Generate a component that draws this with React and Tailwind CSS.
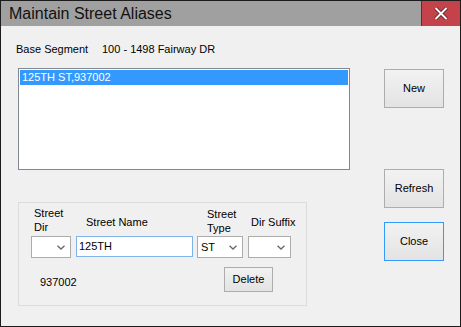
import React from "react";

function Chevron() {
  return (
    <svg width="8" height="5" viewBox="0 0 8 5" className="block">
      <path d="M0.5 0.8 L4 4 L7.5 0.8" fill="none" stroke="#6b6b6b" strokeWidth="1.4" />
    </svg>
  );
}

function Combo({ w, value }) {
  return (
    <div
      className={`${w} h-[22px] bg-white border border-[#acacac] flex items-center justify-between pl-[3px] pr-[5px]`}
    >
      <span className="text-black leading-[13px]">{value}</span>
      <Chevron />
    </div>
  );
}

function Btn({ children, className = "" }) {
  return (
    <div
      className={`flex items-center justify-center border bg-gradient-to-b from-[#f2f2f2] to-[#e3e3e3] text-black ${className}`}
    >
      {children}
    </div>
  );
}

export default function App() {
  return (
    <div className="w-[461px] h-[327px] border border-[#1c1c1c] bg-[#f0f0f0] flex flex-col font-['Liberation_Sans',Arial,sans-serif] text-[11px] leading-[13px] text-black overflow-hidden">
      {/* Title bar */}
      <div className="h-[25px] flex bg-[#a0a0a0] shrink-0">
        <div className="flex-1 flex items-center pl-[8px] text-[16px] leading-[18px] text-[#111]">
          Maintain Street Aliases
        </div>
        <div className="w-[39px] h-full border-l border-[#3c3c3c] bg-[#c4434b] flex items-center justify-center">
          <svg width="16" height="15" viewBox="0 0 16 15">
            <path d="M2.5 2 L13.5 13 M13.5 2 L2.5 13" stroke="#5a1a1f" strokeWidth="3.6" />
            <path d="M2.5 2 L13.5 13 M13.5 2 L2.5 13" stroke="#ffffff" strokeWidth="2" />
          </svg>
        </div>
      </div>

      {/* Body */}
      <div className="flex flex-1">
        {/* Left column */}
        <div className="w-[383px] flex flex-col">
          <div className="mt-[17px] pl-[15px] flex h-[13px]">
            <span className="w-[86px]">Base Segment</span>
            <span>100 - 1498 Fairway DR</span>
          </div>

          <div className="mt-[12px] ml-[17px] w-[332px] h-[102px] border border-[#828790] bg-white p-px">
            <div className="h-[15px] bg-[#3399ff] text-white pl-[2px] flex items-center">
              125TH ST,937002
            </div>
          </div>

          <div className="mt-[32px] ml-[17px] w-[289px] h-[104px] border border-[#dcdcdc] pt-[3px] flex flex-col">
            <div className="flex pl-[12px]">
              <div className="w-[40px] flex flex-col">
                <div className="h-[28px] pl-[3px] leading-[14px]">
                  Street
                  <br />
                  Dir
                </div>
                <div className="mt-[2px]">
                  <Combo w="w-[40px]" value="" />
                </div>
              </div>
              <div className="ml-[5px] w-[117px] flex flex-col">
                <div className="h-[28px] pl-[10px] pt-[9px] leading-[14px] whitespace-nowrap">
                  Street Name
                </div>
                <div className="mt-[2px] h-[21px] bg-white border border-[#7eb4ea] pl-[2px] flex items-center">
                  125TH
                </div>
              </div>
              <div className="ml-[4px] w-[46px] flex flex-col">
                <div className="h-[28px] pl-[10px] pt-[1px] leading-[14px]">
                  Street
                  <br />
                  Type
                </div>
                <div className="mt-[2px]">
                  <Combo w="w-[46px]" value="ST" />
                </div>
              </div>
              <div className="ml-[5px] w-[43px] flex flex-col">
                <div className="h-[28px] pl-[3px] pt-[9px] leading-[14px] whitespace-nowrap">
                  Dir Suffix
                </div>
                <div className="mt-[2px]">
                  <Combo w="w-[43px]" value="" />
                </div>
              </div>
            </div>

            <div className="flex mt-[9px] pl-[21px]">
              <span className="w-[184px] mt-[9px]">937002</span>
              <Btn className="w-[49px] h-[25px] border-[#adadad]">Delete</Btn>
            </div>
          </div>
        </div>

        {/* Right column */}
        <div className="w-[60px] flex flex-col">
          <Btn className="mt-[43px] h-[39px] border-[#adadad]">New</Btn>
          <Btn className="mt-[61px] h-[39px] border-[#adadad]">Refresh</Btn>
          <Btn className="mt-[14px] h-[39px] border-[#3399ff]">Close</Btn>
        </div>
      </div>
    </div>
  );
}
